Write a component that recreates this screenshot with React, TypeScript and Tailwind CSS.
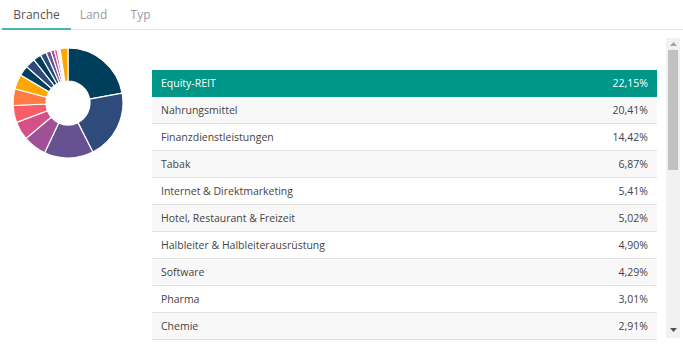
import React from "react";

const rows = [
  { name: "Equity-REIT", value: 22.15 },
  { name: "Nahrungsmittel", value: 20.41 },
  { name: "Finanzdienstleistungen", value: 14.42 },
  { name: "Tabak", value: 6.87 },
  { name: "Internet & Direktmarketing", value: 5.41 },
  { name: "Hotel, Restaurant & Freizeit", value: 5.02 },
  { name: "Halbleiter & Halbleiterausrüstung", value: 4.9 },
  { name: "Software", value: 4.29 },
  { name: "Pharma", value: 3.01 },
  { name: "Chemie", value: 2.91 },
];

// remaining small slices of the donut (not visible in the table viewport)
const rest = [
  { value: 2.3, color: "#003f5c" },
  { value: 1.8, color: "#2f4b7c" },
  { value: 1.4, color: "#665191" },
  { value: 1.1, color: "#a05195" },
  { value: 0.8, color: "#d45087" },
  { value: 0.5, color: "#f3b6c4" },
  { value: 0.4, color: "#fbe3e8" },
  { value: 2.31, color: "#ffa600" },
];

const palette = ["#003f5c", "#2f4b7c", "#665191", "#a05195", "#d45087", "#f95d6a", "#ff7c43", "#ffa600"];

function fmt(v: number) {
  return v.toFixed(2).replace(".", ",") + "%";
}

function Donut() {
  const slices = [
    ...rows.map((row, i) => ({ value: row.value, color: palette[i % palette.length] })),
    ...rest,
  ];
  const cx = 56, cy = 56, R = 55, r = 22;
  const total = slices.reduce((s, x) => s + x.value, 0);
  let acc = 0;
  const pt = (a: number, rad: number) => [cx + rad * Math.sin(a), cy - rad * Math.cos(a)];
  return (
    <svg width="112" height="112" viewBox="0 0 112 112">
      {slices.map((s, i) => {
        const a0 = (acc / total) * Math.PI * 2;
        acc += s.value;
        const a1 = (acc / total) * Math.PI * 2;
        const large = a1 - a0 > Math.PI ? 1 : 0;
        const [x0, y0] = pt(a0, R);
        const [x1, y1] = pt(a1, R);
        const [x2, y2] = pt(a1, r);
        const [x3, y3] = pt(a0, r);
        const d = `M${x0} ${y0} A${R} ${R} 0 ${large} 1 ${x1} ${y1} L${x2} ${y2} A${r} ${r} 0 ${large} 0 ${x3} ${y3}Z`;
        return <path key={i} d={d} fill={s.color} stroke="#fff" strokeWidth="1.2" />;
      })}
    </svg>
  );
}

export default function App() {
  return (
    <div className="w-[683px] h-[346px] bg-white overflow-hidden" style={{ fontFamily: '"Open Sans", sans-serif' }}>
      <div className="flex border-b border-[#e6e6e6] h-[30px] text-[12px]">
        <div className="w-[69px] ml-[2px] pt-px flex justify-center items-center border-b-2 border-[#4db6ac] text-[#555] -mb-px">
          Branche
        </div>
        <div className="w-[45px] pt-px flex justify-center items-center text-[#9a9a9a]">Land</div>
        <div className="w-[49px] pt-px flex justify-center items-center text-[#9a9a9a]">Typ</div>
      </div>
      <div className="flex">
        <div className="w-[152px] pl-[12px] pt-[17px]">
          <Donut />
        </div>
        <div className="flex mt-[8px] h-[300px]">
          <div className="w-[505px] pt-[32px]">
            {rows.map((row, i) => (
              <div
                key={row.name}
                className={
                  "flex justify-between items-center h-[27px] pl-[9px] pr-[9px] pt-px text-[10.5px] border-b " +
                  (i === 0
                    ? "bg-[#009688] text-white border-[#009688]"
                    : i % 2 === 1
                    ? "bg-[#f8f8f8] text-[#444] border-[#e2e2e2]"
                    : "bg-white text-[#444] border-[#e2e2e2]")
                }
              >
                <span>{row.name}</span>
                <span>{fmt(row.value)}</span>
              </div>
            ))}
          </div>
          <div className="ml-[9px] w-[14px] bg-[#f1f1f1] flex flex-col items-center">
            <div className="h-[12px] flex items-center">
              <svg width="7" height="4" viewBox="0 0 7 4"><path d="M3.5 0L7 4H0Z" fill="#a3a3a3" /></svg>
            </div>
            <div className="w-[10px] h-[120px] bg-[#c1c1c1]" />
            <div className="flex-1" />
            <div className="h-[16px] flex items-center">
              <svg width="7" height="4" viewBox="0 0 7 4"><path d="M0 0H7L3.5 4Z" fill="#505050" /></svg>
            </div>
          </div>
        </div>
      </div>
    </div>
  );
}
